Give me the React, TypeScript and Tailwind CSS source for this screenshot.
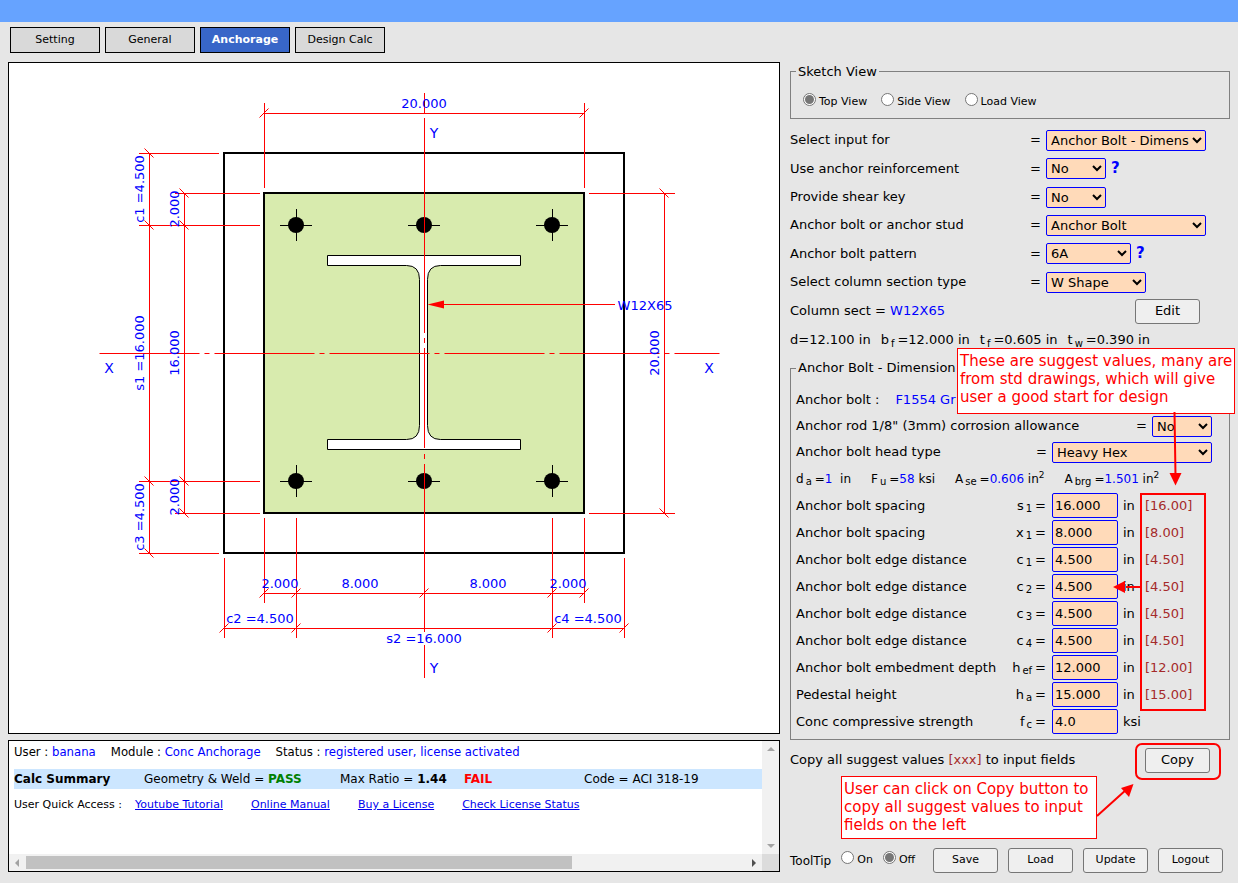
import { useState } from "react";
import type { FunctionComponent, ReactNode } from "react";

const tabs = ["Setting", "General", "Anchorage", "Design Calc"];

const selects = [
  { id: "input-for", label: "Select input for", value: "Anchor Bolt - Dimensions", width: "w-40" },
  { id: "reinf", label: "Use anchor reinforcement", value: "No", width: "w-15", help: true },
  { id: "shear-key", label: "Provide shear key", value: "No", width: "w-15" },
  { id: "bolt-stud", label: "Anchor bolt or anchor stud", value: "Anchor Bolt", width: "w-40" },
  { id: "pattern", label: "Anchor bolt pattern", value: "6A", width: "w-[85px]", help: true },
  { id: "section", label: "Select column section type", value: "W Shape", width: "w-25" },
];

const dims = [
  { label: "Anchor bolt spacing", sym: "s", sub: "1", value: "16.000", unit: "in", hint: "[16.00]" },
  { label: "Anchor bolt spacing", sym: "x", sub: "1", value: "8.000", unit: "in", hint: "[8.00]" },
  { label: "Anchor bolt edge distance", sym: "c", sub: "1", value: "4.500", unit: "in", hint: "[4.50]" },
  { label: "Anchor bolt edge distance", sym: "c", sub: "2", value: "4.500", unit: "in", hint: "[4.50]" },
  { label: "Anchor bolt edge distance", sym: "c", sub: "3", value: "4.500", unit: "in", hint: "[4.50]" },
  { label: "Anchor bolt edge distance", sym: "c", sub: "4", value: "4.500", unit: "in", hint: "[4.50]" },
  { label: "Anchor bolt embedment depth", sym: "h", sub: "ef", value: "12.000", unit: "in", hint: "[12.00]" },
  { label: "Pedestal height", sym: "h", sub: "a", value: "15.000", unit: "in", hint: "[15.00]" },
  { label: "Conc compressive strength", sym: "f", sub: "c", value: "4.0", unit: "ksi", hint: "" },
];

const links = ["Youtube Tutorial", "Online Manual", "Buy a License", "Check License Status"];

type SelectProps = { id: string; value: string; width: string };

const Select: FunctionComponent<SelectProps> = ({ id, value, width }) => (
  <select
    id={id}
    className={`h-[21px] rounded-[2px] border border-[#0000ff] bg-[#ffdab9] text-[13px] text-black ${width}`}
  >
    <option>{value}</option>
  </select>
);

const Button: FunctionComponent<{ children: ReactNode; small?: boolean }> = ({ children, small }) => (
  <button
    type="button"
    className={`h-[25px] w-[65px] rounded-[3px] border border-[#767676] bg-[#efefef] ${
      small ? "text-[11px]" : "text-[13px]"
    }`}
  >
    {children}
  </button>
);

type RadioProps = {
  name: string;
  label: string;
  checked: boolean;
  onChange: () => void;
};

const Radio: FunctionComponent<RadioProps> = ({ name, label, checked, onChange }) => (
  <label className="flex items-center gap-[3px] text-[11px]">
    <input
      type="radio"
      name={name}
      checked={checked}
      onChange={onChange}
      className="mb-1.5 flex h-[13px] w-[13px] appearance-none items-center justify-center rounded-full border border-[#767676] bg-white before:h-[9px] before:w-[9px] before:rounded-full checked:before:bg-[#767676]"
    />
    {label}
  </label>
);

const Sub: FunctionComponent<{ children: ReactNode }> = ({ children }) => (
  <sub className="mr-[3px] ml-0.5 text-[10px]">{children}</sub>
);

// dimension ticks: "/" on horizontal lines, "\" on vertical ones
const hTicks = [
  [264, 113], [584, 113],
  [264, 593], [296, 593], [424, 593], [552, 593], [584, 593],
  [224, 628], [296, 628], [552, 628], [624, 628],
];
const vTicks = [
  [149, 153], [149, 225], [149, 481], [149, 553],
  [184, 193], [184, 225], [184, 481], [184, 513],
  [664, 193], [664, 513],
];
const bolts = [
  [296, 225], [424, 225], [552, 225],
  [296, 481], [424, 481], [552, 481],
];

const hLabels = [
  { x: 424, y: 108, t: "20.000" },
  { x: 280, y: 588, t: "2.000" },
  { x: 360, y: 588, t: "8.000" },
  { x: 488, y: 588, t: "8.000" },
  { x: 568, y: 588, t: "2.000" },
  { x: 260, y: 623, t: "c2 =4.500" },
  { x: 588, y: 623, t: "c4 =4.500" },
  { x: 424, y: 643, t: "s2 =16.000" },
  { x: 645, y: 310, t: "W12X65" },
];
const vLabels = [
  { x: 144, y: 189, t: "c1 =4.500" },
  { x: 144, y: 353, t: "s1 =16.000" },
  { x: 144, y: 517, t: "c3 =4.500" },
  { x: 179, y: 209, t: "2.000" },
  { x: 179, y: 353, t: "16.000" },
  { x: 179, y: 497, t: "2.000" },
  { x: 659, y: 353, t: "20.000" },
];
const axisLabels = [
  { x: 434, y: 138, t: "Y" },
  { x: 434, y: 673, t: "Y" },
  { x: 109, y: 373, t: "X" },
  { x: 709, y: 373, t: "X" },
];

const Sketch: FunctionComponent = () => (
  <svg viewBox="9 63 770 670" className="block h-auto w-full" role="img" aria-label="Base plate top view">
    <rect x="224" y="153" width="400" height="400" fill="none" stroke="#000" strokeWidth="2" />
    <rect x="264" y="193" width="320" height="320" fill="#d8ebae" stroke="#000" strokeWidth="2" />
    <path
      d="M327.5 255.5H520.5V265.5H440.5Q427.5 265.5 427.5 279.5V425.5Q427.5 439.5 440.5 439.5H520.5V449.5H327.5V439.5H406.5Q419.5 439.5 419.5 425.5V279.5Q419.5 265.5 406.5 265.5H327.5Z"
      fill="#fff"
      stroke="#000"
    />
    {bolts.map(([x, y]) => (
      <g key={`${x}-${y}`}>
        <circle cx={x} cy={y} r="8" />
        <path d={`M${x - 16} ${y + 0.5}h32M${x + 0.5} ${y - 16}v32`} stroke="#000" />
      </g>
    ))}
    <g stroke="#f00" fill="none">
      <path d="M99.5 353.5H719.5" strokeDasharray="100 5 5 5" />
      <path d="M424.5 93V113M424.5 118V333M424.5 338V343M424.5 348V448M424.5 454V459M424.5 464V632M424.5 645V678" />
      <path d="M264 113.5H585M264.5 103V188M584.5 103V188" />
      <path d="M149.5 153V554M139 153.5H219M139 225.5H260M139 481.5H260M139 553.5H219" />
      <path d="M184.5 193V514M175 193.5H260M175 513.5H260" />
      <path d="M664.5 193V514M589 193.5H675M589 513.5H675" />
      <path d="M264 593.5H585M264.5 518V603M296.5 518V638M552.5 518V638M584.5 518V603" />
      <path d="M224 628.5H625M224.5 558V638M624.5 558V638" />
      <path d="M440 304.5H615" />
      {hTicks.map(([x, y]) => (
        <path key={`h${x}-${y}`} d={`M${x - 4.5} ${y + 4.5}l9 -9`} />
      ))}
      {vTicks.map(([x, y]) => (
        <path key={`v${x}-${y}`} d={`M${x - 4.5} ${y - 4.5}l9 9`} />
      ))}
    </g>
    <path d="M427.5 304.5L444 300.5V308.5Z" fill="#f00" />
    <g fill="#00f" fontSize="13" textAnchor="middle">
      {hLabels.map(({ x, y, t }) => (
        <text key={`${x}-${y}`} x={x} y={y}>
          {t}
        </text>
      ))}
      {vLabels.map(({ x, y, t }) => (
        <text key={`${x}-${y}`} transform={`translate(${x} ${y}) rotate(-90)`}>
          {t}
        </text>
      ))}
    </g>
    <g fill="#00f" fontSize="14" textAnchor="middle">
      {axisLabels.map(({ x, y, t }) => (
        <text key={`${x}-${y}`} x={x} y={y}>
          {t}
        </text>
      ))}
    </g>
  </svg>
);

const StatusPanel: FunctionComponent = () => (
  <div className="mt-1.5 grid h-33 grid-cols-[1fr_17px] grid-rows-[1fr_17px] border border-black bg-white">
    <div className="overflow-hidden pl-[5px] whitespace-nowrap">
      <p className="flex h-[22px] gap-[15px] font-['DejaVu_Sans_Condensed','DejaVu_Sans',sans-serif] text-[13px] leading-[22px]">
        <span>
          User : <span className="text-[#00f]">banana</span>
        </span>
        <span>
          Module : <span className="text-[#00f]">Conc Anchorage</span>
        </span>
        <span>
          Status : <span className="text-[#00f]">registered user, license activated</span>
        </span>
      </p>
      <div className="mt-1.5 flex h-5 bg-[#cce6ff] text-[12px] leading-5">
        <b className="w-[130px]">Calc Summary</b>
        <span className="w-[196px]">
          Geometry &amp; Weld = <b className="text-[#008000]">PASS</b>
        </span>
        <span className="w-31">
          Max Ratio = <b>1.44</b>
        </span>
        <b className="w-30 text-[#f00]">FAIL</b>
        <span>Code = ACI 318-19</span>
      </div>
      <p className="mt-1.5 flex h-5 text-[11px] leading-5">
        <span className="mr-[13px]">User Quick Access :</span>
        {links.map((link) => (
          <a key={link} href="#" className="mr-7 text-[#00e] underline">
            {link}
          </a>
        ))}
      </p>
    </div>
    <div className="flex flex-col items-center justify-between bg-[#f1f1f1] py-1.5">
      <svg width="8" height="4" viewBox="0 0 8 4" fill="#a3a3a3">
        <path d="M0 4L4 0L8 4Z" />
      </svg>
      <svg width="8" height="4" viewBox="0 0 8 4" fill="#a3a3a3">
        <path d="M0 0H8L4 4Z" />
      </svg>
    </div>
    <div className="flex items-center bg-[#f1f1f1] px-1.5">
      <svg width="4" height="8" viewBox="0 0 4 8" fill="#a3a3a3">
        <path d="M4 0V8L0 4Z" />
      </svg>
      <div className="mx-[7px] flex-1">
        <div className="h-[13px] w-[76%] bg-[#c1c1c1]" />
      </div>
      <svg width="4" height="8" viewBox="0 0 4 8" fill="#505050">
        <path d="M0 0L4 4L0 8Z" />
      </svg>
    </div>
    <div className="bg-[#dcdcdc]" />
  </div>
);

// red notes and arrows drawn over the input panel
const Notes: FunctionComponent = () => (
  <>
    <p className="absolute top-[286px] left-[167px] h-[66px] w-[278px] border border-[#f00] bg-white pt-[3px] pl-0.5 text-[15px] leading-[18px] whitespace-nowrap text-[#f00]">
      These are suggest values, many are
      <br />
      from std drawings, which will give
      <br />
      user a good start for design
    </p>
    <p className="absolute top-[714px] left-[51px] h-[63px] w-64 border border-[#f00] bg-white pt-[3px] pl-0.5 text-[15px] leading-[18px] whitespace-nowrap text-[#f00]">
      User can click on Copy button to
      <br />
      copy all suggest values to input
      <br />
      fields on the left
    </p>
    <svg
      className="pointer-events-none absolute top-0 left-0"
      width="448"
      height="821"
      viewBox="790 62 448 821"
      fill="none"
      stroke="#f00"
      strokeWidth="2"
    >
      <path d="M1174.5 412L1175.5 476M1141 587H1126M1097 816L1127 789" />
      <rect x="1141" y="494" width="64" height="216" />
      <rect x="1136" y="744" width="84" height="35" rx="6" />
      <g fill="#f00" stroke="none">
        <path d="M1169.5 473H1181.5L1175.5 485.5Z" />
        <path d="M1125 581V593L1113 587Z" />
        <path d="M1133.5 784L1121 788L1129 797Z" />
      </g>
    </svg>
  </>
);

export default function App() {
  const [view, setView] = useState("Top View");
  const [tip, setTip] = useState("Off");

  return (
    <div className="min-h-screen bg-[#e6e6e6] font-['DejaVu_Sans',sans-serif] text-[13px] text-black">
      <header className="h-[22px] bg-[#66a3ff]" />
      <nav className="flex gap-[5px] px-2.5 pt-[5px] pb-[9px]">
        {tabs.map((tab) => (
          <button
            key={tab}
            type="button"
            className={`h-[26px] w-[90px] border border-black text-[11px] ${
              tab === "Anchorage" ? "bg-[#3866c8] font-bold text-white" : "bg-[#d9d9d9]"
            }`}
          >
            {tab}
          </button>
        ))}
      </nav>
      <main className="flex gap-2.5 px-2">
        <div className="min-w-0 flex-1">
          <div className="border border-black bg-white">
            <Sketch />
          </div>
          <StatusPanel />
        </div>
        <div className="relative w-[440px] shrink-0 whitespace-nowrap">
          <fieldset className="h-[57px] border border-[#808080] px-[5px]">
            <legend className="px-0.5 pt-0.5 leading-4">Sketch View</legend>
            <div className="flex gap-3.5 px-[7px] pt-[13px]">
              {["Top View", "Side View", "Load View"].map((v) => (
                <Radio key={v} name="view" label={v} checked={view === v} onChange={() => setView(v)} />
              ))}
            </div>
          </fieldset>

          <div className="mt-[7px]">
            {selects.map(({ id, label, value, width, help }) => (
              <div key={id} className={`flex items-center ${help ? "h-[29px]" : "h-7"}`}>
                <label htmlFor={id} className="w-60">
                  {label}
                </label>
                <span className="w-4">=</span>
                <Select id={id} value={value} width={width} />
                {help && <b className="ml-[5px] text-[15px] text-[#00f]">?</b>}
              </div>
            ))}
          </div>
          <div className="flex h-[30px] items-center justify-between pr-[30px]">
            <span>
              Column sect = <span className="text-[#00f]">W12X65</span>
            </span>
            <Button>Edit</Button>
          </div>
          <p className="flex h-7 items-center gap-2.5">
            <span>d=12.100 in</span>
            <span>
              b<Sub>f</Sub>=12.000 in
            </span>
            <span>
              t<Sub>f</Sub>=0.605 in
            </span>
            <span>
              t<Sub>w</Sub>=0.390 in
            </span>
          </p>

          <fieldset className="mt-1.5 border border-[#808080] px-[5px] pb-1">
            <legend className="px-0.5 leading-4">Anchor Bolt - Dimension</legend>
            <div className="pt-2.5">
              <p className="flex h-[27px] items-center gap-4">
                <span>Anchor bolt :</span>
                <span className="text-[#00f]">F1554 Gr</span>
              </p>
              <div className="flex h-[26px] items-center">
                <label htmlFor="corrosion" className="w-85">
                  Anchor rod 1/8" (3mm) corrosion allowance
                </label>
                <span className="w-4">=</span>
                <Select id="corrosion" value="No" width="w-15" />
              </div>
              <div className="flex h-[26px] items-center">
                <label htmlFor="head" className="w-60">
                  Anchor bolt head type
                </label>
                <span className="w-4">=</span>
                <Select id="head" value="Heavy Hex" width="w-40" />
              </div>
              <p className="flex h-[27px] items-center gap-5 text-[12px]">
                <span>
                  d<Sub>a</Sub>=<span className="text-[#00f]">1</span>&nbsp; in
                </span>
                <span>
                  F<Sub>u</Sub>=<span className="text-[#00f]">58</span> ksi
                </span>
                <span>
                  A<Sub>se</Sub>=<span className="text-[#00f]">0.606</span> in<sup>2</sup>
                </span>
                <span>
                  A<Sub>brg</Sub>=<span className="text-[#00f]">1.501</span> in<sup>2</sup>
                </span>
              </p>
              {dims.map(({ label, sym, sub, value, unit, hint }) => (
                <div key={sym + sub} className="flex h-[27px] items-center">
                  <label htmlFor={sym + sub} className="flex w-64 justify-between pr-1.5">
                    <span>{label}</span>
                    <span>
                      {sym}
                      <Sub>{sub}</Sub>=
                    </span>
                  </label>
                  <input
                    id={sym + sub}
                    defaultValue={value}
                    className="h-[25px] w-[66px] rounded-[2px] border border-[#0000ff] bg-[#ffdab9] px-0.5"
                  />
                  <span className="ml-[5px] w-[22px]">{unit}</span>
                  <span className="text-[#a52a2a]">{hint}</span>
                </div>
              ))}
            </div>
          </fieldset>

          <div className="flex h-10 items-center justify-between pr-5">
            <span>
              Copy all suggest values <span className="text-[#a52a2a]">[xxx]</span> to input fields
            </span>
            <Button>Copy</Button>
          </div>
          <div className="mt-17 flex items-center">
            <span className="mr-2.5 text-[12px]">ToolTip</span>
            <div className="flex gap-2.5">
              {["On", "Off"].map((v) => (
                <Radio key={v} name="tooltip" label={v} checked={tip === v} onChange={() => setTip(v)} />
              ))}
            </div>
            <div className="ml-auto flex gap-2.5 pr-[7px]">
              {["Save", "Load", "Update", "Logout"].map((name) => (
                <Button key={name} small>
                  {name}
                </Button>
              ))}
            </div>
          </div>
          <Notes />
        </div>
      </main>
    </div>
  );
}
